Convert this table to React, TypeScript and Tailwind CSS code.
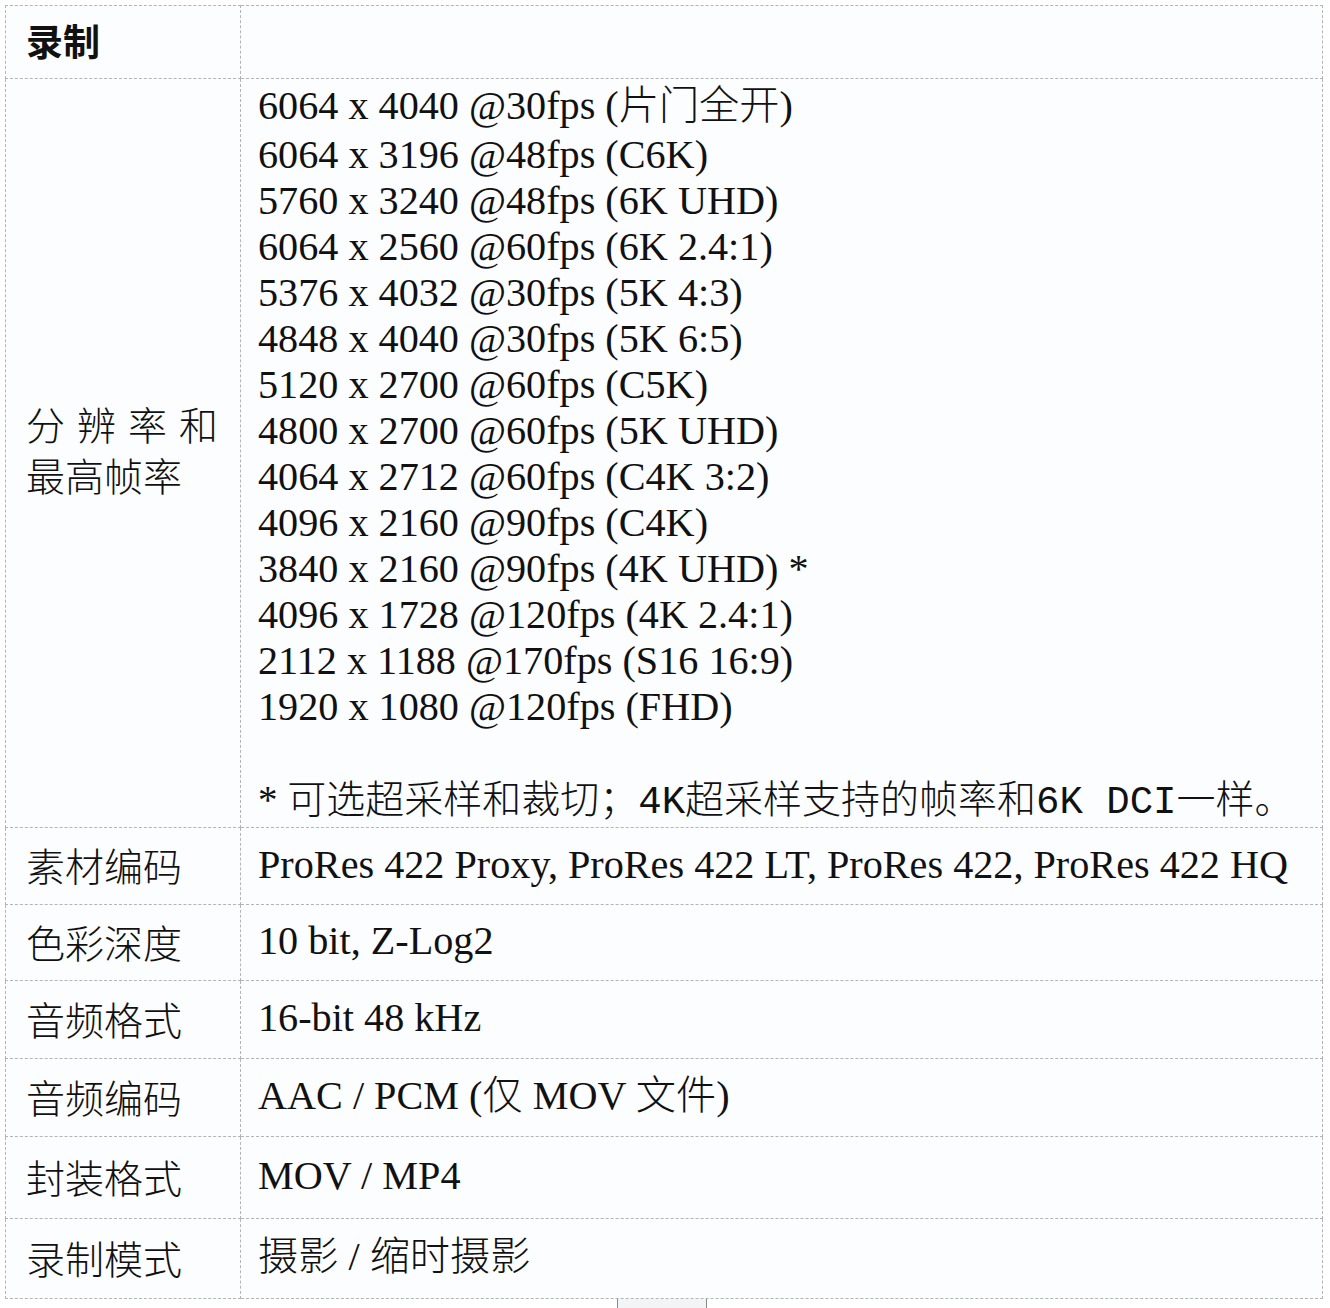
const resolutions = [
  '6064 x 4040 @30fps (片门全开)',
  '6064 x 3196 @48fps (C6K)',
  '5760 x 3240 @48fps (6K UHD)',
  '6064 x 2560 @60fps (6K 2.4:1)',
  '5376 x 4032 @30fps (5K 4:3)',
  '4848 x 4040 @30fps (5K 6:5)',
  '5120 x 2700 @60fps (C5K)',
  '4800 x 2700 @60fps (5K UHD)',
  '4064 x 2712 @60fps (C4K 3:2)',
  '4096 x 2160 @90fps (C4K)',
  '3840 x 2160 @90fps (4K UHD) *',
  '4096 x 1728 @120fps (4K 2.4:1)',
  '2112 x 1188 @170fps (S16 16:9)',
  '1920 x 1080 @120fps (FHD)',
]

const specs = [
  { label: '素材编码', value: 'ProRes 422 Proxy, ProRes 422 LT, ProRes 422, ProRes 422 HQ', h: 'h-[77px]' },
  { label: '色彩深度', value: '10 bit, Z-Log2', h: 'h-[76px]' },
  { label: '音频格式', value: '16-bit 48 kHz', h: 'h-[78px]' },
  { label: '音频编码', value: 'AAC / PCM (仅 MOV 文件)', h: 'h-[78px]' },
  { label: '封装格式', value: 'MOV / MP4', h: 'h-[82px]' },
  { label: '录制模式', value: '摄影 / 缩时摄影', h: 'h-[80px]' },
]

const cellBorder = 'border border-dashed border-[#b4b4b4]'
const labelCls = `${cellBorder} pl-[20px] align-middle font-['Noto_Sans_CJK_SC',sans-serif] font-light text-[39px] leading-[51px] text-[#111]`
const valueCls = `${cellBorder} pl-[17px] align-middle font-['Liberation_Serif','Noto_Sans_CJK_SC',serif] font-light text-[40.2px] leading-[46px] text-[#111] whitespace-nowrap`

const App = () => {
  return (
    <div className="min-h-[1308px] bg-white pt-[5px] pl-[5px]">
      <table className="w-[1318px] border-collapse bg-[#fcfdfe] table-fixed">
        <colgroup>
          <col className="w-[235px]" />
          <col />
        </colgroup>
        <tbody>
          <tr className="h-[73px]">
            <td className={`${cellBorder} pl-[20px] pb-[3px] align-middle font-['Noto_Sans_CJK_SC',sans-serif] font-bold text-[37px] text-[#111]`}>
              录制
            </td>
            <td className={cellBorder}></td>
          </tr>
          <tr className="h-[749px]">
            <td className={`${labelCls} pb-[8px]`}>
              <div className="tracking-[12px]">分辨率和</div>
              <div>最高帧率</div>
            </td>
            <td className={`${valueCls} !align-top pt-[4px] pb-0`}>
              {resolutions.map((r, i) => (
                <div key={r} className={i === 0 ? 'mb-[3px]' : ''}>
                  {r}
                </div>
              ))}
              <div className="h-[49px]"></div>
              <div className="font-['Liberation_Mono','Noto_Sans_CJK_SC',monospace] text-[39px] leading-[42px]">
                <span className="font-['Liberation_Serif',serif]">* </span>
                可选超采样和裁切；4K超采样支持的帧率和6K DCI一样。
              </div>
            </td>
          </tr>
          {specs.map((s) => (
            <tr key={s.label} className={s.h}>
              <td className={`${labelCls} pb-[3px]`}>{s.label}</td>
              <td className={`${valueCls} pb-[3px]`}>{s.value}</td>
            </tr>
          ))}
        </tbody>
      </table>
      <div className="ml-[612px] h-[10px] w-[90px] border-x border-[#888] bg-[#f3f4f6]"></div>
    </div>
  )
}

export default App
